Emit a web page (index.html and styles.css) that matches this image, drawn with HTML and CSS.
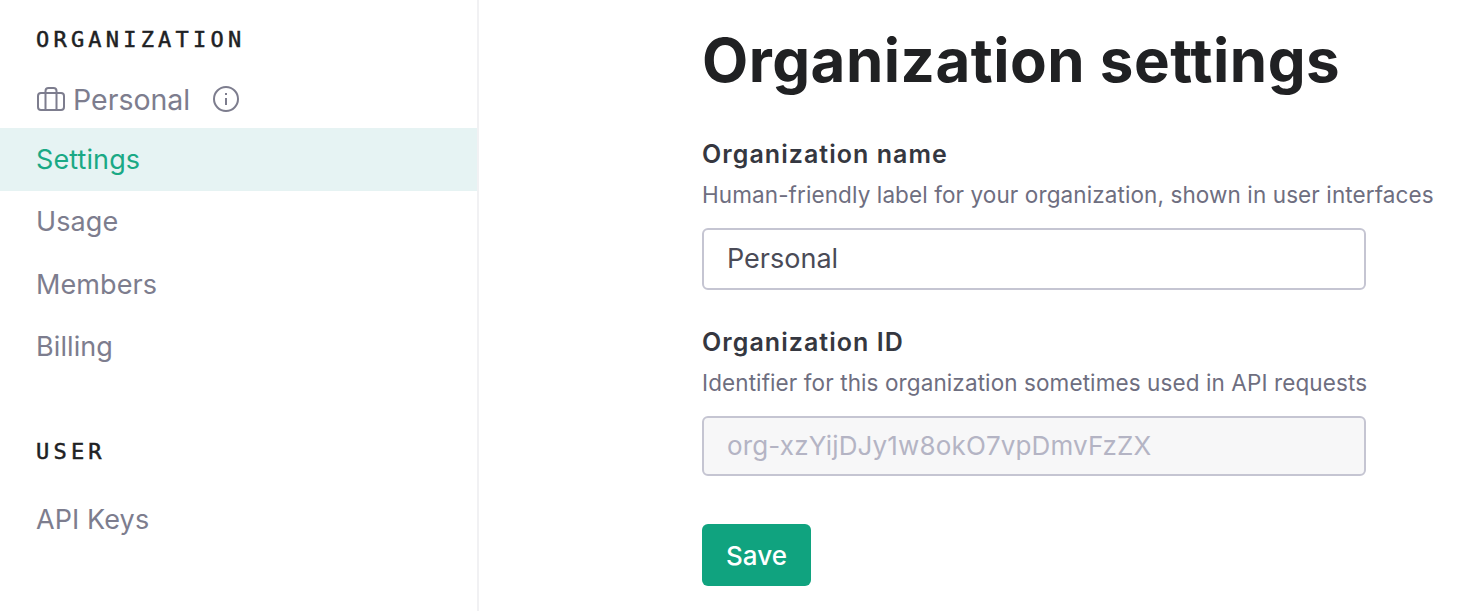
FILE: index.html
```html
<!DOCTYPE html>
<html lang="en">
<head>
<meta charset="utf-8">
<title>Organization settings</title>
<link rel="stylesheet" href="styles.css">
</head>
<body>
<div class="layout">
  <aside class="sidebar">
    <h2 class="heading heading-org">ORGANIZATION</h2>
    <div class="org-row">
      <svg class="icon-case" width="28" height="24" viewBox="0 0 28 24" fill="none" stroke="#7d7d8e" stroke-width="2"><rect x="1" y="6" width="26" height="17" rx="3"/><path d="M8.500 6V23M19.500 6V23M8.500 6V4a3 3 0 0 1 3-3h5a3 3 0 0 1 3 3v2"/></svg>
      <span class="org-name">Personal</span>
      <svg class="icon-info" width="28" height="28" viewBox="0 0 28 28" fill="none" stroke="#7d7d8e" stroke-width="2"><circle cx="14" cy="14" r="12"/><path d="M14 13v7M14 8v2"/></svg>
    </div>
    <nav class="nav">
      <a class="nav-item active">Settings</a>
      <a class="nav-item">Usage</a>
      <a class="nav-item">Members</a>
      <a class="nav-item">Billing</a>
    </nav>
    <h2 class="heading heading-user">USER</h2>
    <nav class="nav">
      <a class="nav-item">API Keys</a>
    </nav>
  </aside>
  <main class="content">
    <h1 class="title">Organization settings</h1>
    <section class="field">
      <div class="label">Organization name</div>
      <div class="hint">Human-friendly label for your organization, shown in user interfaces</div>
      <div class="input">Personal</div>
    </section>
    <section class="field">
      <div class="label">Organization ID</div>
      <div class="hint">Identifier for this organization sometimes used in API requests</div>
      <div class="input disabled">org-xzYijDJy1w8okO7vpDmvFzZX</div>
    </section>
    <button class="save">Save</button>
  </main>
</div>
</body>
</html>
```
FILE: styles.css
```css
* { box-sizing: border-box; }
html, body { margin: 0; height: 100%; overflow: hidden; background: #fff; }
body { font-family: Inter, "Noto Sans", sans-serif; color: #202123; }
.layout { display: flex; height: 611px; }
.sidebar { width: 479px; flex: none; border-right: 2px solid #f1f1f3; padding-top: 26px; }
.heading { margin: 0 0 0 36px; font-family: "DejaVu Sans Mono", monospace; font-size: 22px; line-height: 28px; font-weight: 400; letter-spacing: 4.200px; -webkit-text-stroke: 0.500px #202123; color: #202123; }
.org-row { display: flex; align-items: center; height: 58px; margin-top: 16px; padding-left: 37px; color: #7d7d8e; }
.org-name { font-size: 28.500px; margin-left: 8px; }
.icon-info { margin-left: 22px; }
.nav { display: flex; flex-direction: column; }
.nav-item { height: 62.500px; display: flex; align-items: center; padding-left: 36px; font-size: 27px; letter-spacing: 0.100px; color: #7d7d8e; }
.nav-item.active { background: #e6f3f3; color: #1aa985; }
.heading-user { margin-top: 60px; margin-bottom: 22px; }
.content { padding: 26px 0 0 223px; flex: 1; }
.title { margin: 0 0 8px; font-size: 60px; line-height: 68px; font-weight: 700; letter-spacing: 0.500px; color: #202123; }
.field { display: flow-root; }
.label { margin-top: 37px; font-size: 25px; line-height: 30px; font-weight: 600; letter-spacing: 1.050px; color: #353740; }
.hint { font-size: 22.500px; line-height: 30px; margin-top: 11px; letter-spacing: 0.100px; color: #6e6e80; }
.input { width: 664px; height: 62px; margin-top: 18px; padding: 0 0 2px 23px; display: flex; align-items: center; border: 2px solid #c5c5d2; border-radius: 6px; font-size: 27px; color: #4a4b57; }
.input.disabled { background: #f7f7f8; color: #b4b4c4; height: 60px; font-size: 26px; letter-spacing: 0.150px; }
.save { display: block; width: 109px; height: 62px; margin-top: 48px; border: 0; border-radius: 6px; background: #10a37f; color: #fff; font: 500 26px Inter, sans-serif; }
```
